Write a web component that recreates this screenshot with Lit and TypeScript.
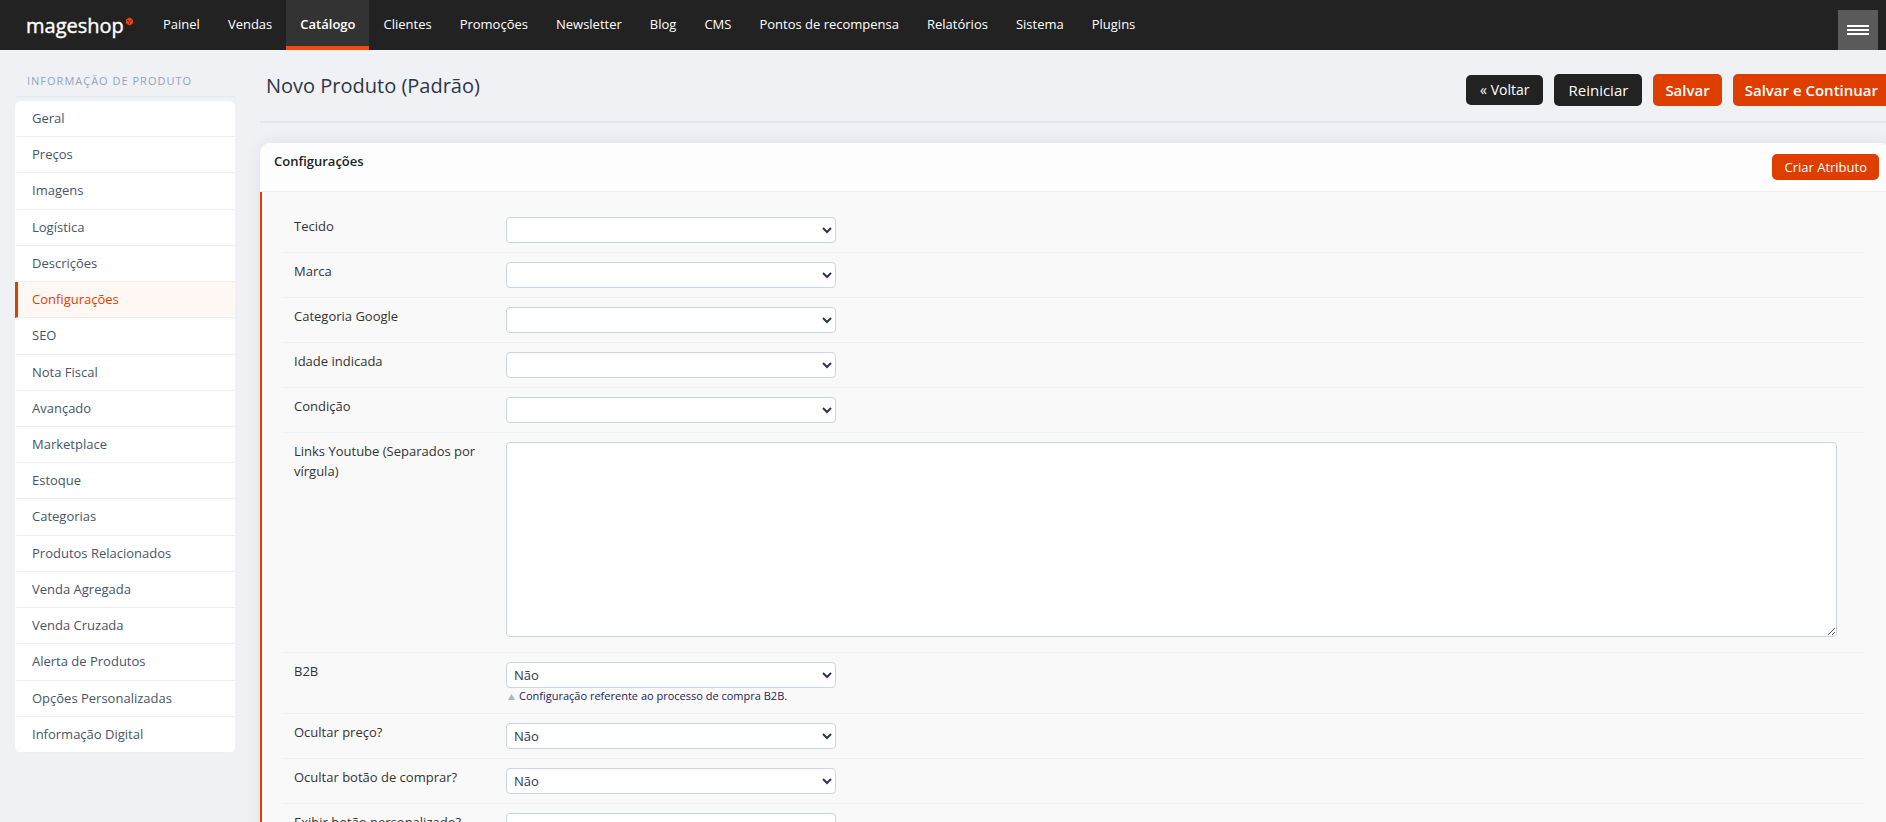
import { LitElement, html, css, nothing } from "lit";
import { customElement, state } from "lit/decorators.js";

interface Field {
  id: string;
  label: string;
  kind: "select" | "textarea";
  options: string[];
  note?: string;
}

const NAV = [
  "Painel", "Vendas", "Catálogo", "Clientes", "Promoções", "Newsletter", "Blog",
  "CMS", "Pontos de recompensa", "Relatórios", "Sistema", "Plugins",
];

const TABS = [
  "Geral", "Preços", "Imagens", "Logística", "Descrições", "Configurações", "SEO",
  "Nota Fiscal", "Avançado", "Marketplace", "Estoque", "Categorias",
  "Produtos Relacionados", "Venda Agregada", "Venda Cruzada", "Alerta de Produtos",
  "Opções Personalizadas", "Informação Digital",
];

const YES_NO = ["Não", "Sim"];

const FIELDS: Field[] = [
  { id: "tecido", label: "Tecido", kind: "select", options: [""] },
  { id: "marca", label: "Marca", kind: "select", options: [""] },
  { id: "categoria", label: "Categoria Google", kind: "select", options: [""] },
  { id: "idade", label: "Idade indicada", kind: "select", options: [""] },
  { id: "condicao", label: "Condição", kind: "select", options: [""] },
  { id: "youtube", label: "Links Youtube (Separados por vírgula)", kind: "textarea", options: [] },
  { id: "b2b", label: "B2B", kind: "select", options: YES_NO, note: "Configuração referente ao processo de compra B2B." },
  { id: "ocultar-preco", label: "Ocultar preço?", kind: "select", options: YES_NO },
  { id: "ocultar-botao", label: "Ocultar botão de comprar?", kind: "select", options: YES_NO },
  { id: "exibir-botao", label: "Exibir botão personalizado?", kind: "select", options: YES_NO },
];

@customElement("top-bar")
export class TopBar extends LitElement {
  static styles = css`
    :host {
      display: flex;
      align-items: stretch;
      height: 50px;
      padding-left: 26px;
      background: #222;
      box-sizing: border-box;
    }
    .logo {
      display: block;
      flex: none;
      width: 123px;
      height: 50px;
    }
    .wordmark {
      font: 500 20px "Open Sans", sans-serif;
      fill: #fff;
      stroke: #fff;
      stroke-width: 0.4px;
    }
    .nav {
      display: flex;
      flex: 1;
    }
    .link {
      padding: 0 14px;
      color: #fff;
      font-size: 13px;
      line-height: 48px;
      text-decoration: none;
      white-space: nowrap;
      box-sizing: border-box;
    }
    .active {
      background: #333;
      border-bottom: 4px solid #f44a0b;
      font-weight: 600;
    }
    .menu {
      display: flex;
      flex-direction: column;
      align-items: center;
      justify-content: center;
      gap: 2px;
      width: 40px;
      height: 40px;
      margin: 10px 8px 0 0;
      padding: 0;
      border: 0;
      background: #5a5a5a;
    }
    .bar {
      width: 22px;
      height: 2px;
      background: #fff;
    }
  `;

  render() {
    return html`
      <svg class="logo" viewBox="0 0 123 50" role="img" aria-label="mageshop">
        <text class="wordmark" x="0" y="33">mageshop</text>
        <path d="M103.500 18l3 1.700v3.600l-3 1.700-3-1.700v-3.600z" fill="#e8480f" stroke="#e8480f" stroke-linejoin="round" />
        <path d="M100.800 20l2.700 1.500 2.700-1.500M103.500 21.500v3" fill="none" stroke="#8d2a06" />
      </svg>
      <nav class="nav">
        ${NAV.map((n) => html`<a href="#" class="link ${n === "Catálogo" ? "active" : ""}">${n}</a>`)}
      </nav>
      <button class="menu" aria-label="Menu">
        <span class="bar"></span><span class="bar"></span><span class="bar"></span>
      </button>
    `;
  }
}

@customElement("side-tabs")
export class SideTabs extends LitElement {
  @state() current = "Configurações";

  static styles = css`
    :host {
      display: block;
    }
    .heading {
      margin: 0 0 4px;
      padding: 0 12px 5px;
      border-bottom: 1px solid #e2e8f0;
      color: #94a3b8;
      font-size: 11px;
      font-weight: 400;
      line-height: 20px;
      letter-spacing: 1px;
      text-transform: uppercase;
    }
    .list {
      display: grid;
      min-height: 652px;
      margin: 0;
      padding: 0;
      list-style: none;
      background: #fff;
      border-radius: 6px;
      overflow: hidden;
    }
    .item {
      display: grid;
    }
    .tab {
      padding: 8px 12px 8px 14px;
      border-left: 3px solid transparent;
      border-bottom: 1px solid #eee;
      color: #475569;
      font-size: 13px;
      line-height: 19px;
      text-decoration: none;
    }
    .current {
      border-left-color: #de3e00;
      background: #fff7f4;
      color: #de3e00;
    }
  `;

  render() {
    return html`
      <h3 class="heading">Informação de Produto</h3>
      <ul class="list">
        ${TABS.map((t) => html`
          <li class="item"><a href="#" class="tab ${t === this.current ? "current" : ""}"
            @click=${(e: Event) => { e.preventDefault(); this.current = t; }}>${t}</a></li>`)}
      </ul>
    `;
  }
}

@customElement("attribute-form")
export class AttributeForm extends LitElement {
  static styles = css`
    :host {
      display: block;
      border-radius: 10px;
      background: #f9f9f9;
      box-shadow: 0 0 16px rgba(30, 41, 59, 0.08);
    }
    .head {
      display: flex;
      align-items: flex-start;
      justify-content: space-between;
      padding: 8px 11px 11px 14px;
      border-bottom: 1px solid #edf0f2;
      border-radius: 10px 10px 0 0;
      background: #fdfdfd;
    }
    .title {
      margin: 0;
      color: #222;
      font-size: 13px;
      font-weight: 600;
      line-height: 20px;
    }
    .create {
      margin-top: 3px;
      height: 26px;
      padding: 0 12px;
      border: 0;
      border-radius: 5px;
      background: #de3e00;
      color: #fff;
      font: 13px "Open Sans", sans-serif;
    }
    .body {
      padding: 16px 26px 40px 20px;
      border-left: 2px solid #de3e00;
    }
    .row {
      display: grid;
      grid-template-columns: 184px 1fr;
      column-gap: 28px;
      padding: 8px 27px 9px 12px;
      border-bottom: 1px solid #edf2f7;
    }
    .label {
      color: #333;
      font-size: 13px;
      line-height: 20px;
    }
    .control {
      padding-top: 1px;
    }
    .select,
    .textarea {
      display: block;
      box-sizing: border-box;
      border: 1px solid #cbd5e1;
      border-radius: 4px;
      background: #fff;
      color: #2d3748;
      font: 13px "Open Sans", sans-serif;
    }
    .select {
      width: 330px;
      height: 26px;
      padding: 0 3px;
    }
    .textarea {
      width: 100%;
      height: 195px;
      margin-bottom: 6px;
      padding: 4px 7px;
    }
    .note {
      display: flex;
      align-items: center;
      gap: 4px;
      margin: 0;
      padding-left: 2px;
      color: #1e2456;
      font-size: 11px;
      line-height: 16px;
    }
    .caret {
      width: 7px;
      height: 7px;
      fill: #a9b8bd;
    }
  `;

  private control(f: Field) {
    if (f.kind === "textarea") return html`<textarea class="textarea" id=${f.id}></textarea>`;
    return html`<select class="select" id=${f.id}>
      ${f.options.map((o) => html`<option>${o}</option>`)}
    </select>`;
  }

  render() {
    return html`
      <header class="head">
        <h2 class="title">Configurações</h2>
        <button class="create">Criar Atributo</button>
      </header>
      <div class="body">
        ${FIELDS.map((f) => html`
          <div class="row">
            <label class="label" for=${f.id}>${f.label}</label>
            <div class="control">
              ${this.control(f)}
              ${f.note
                ? html`<p class="note"><svg class="caret" viewBox="0 0 7 7"><path d="M3.500 1l3.500 6H0z" /></svg>${f.note}</p>`
                : nothing}
            </div>
          </div>`)}
      </div>
    `;
  }
}

@customElement("app-root")
export class AppRoot extends LitElement {
  static styles = css`
    :host {
      display: block;
      height: 100vh;
      overflow: hidden;
      background: #f0f1f5;
      font-family: "Open Sans", sans-serif;
    }
    .layout {
      display: grid;
      grid-template-columns: 220px 1fr;
      column-gap: 25px;
      margin-right: -4px;
      padding-left: 15px;
    }
    .side {
      padding-top: 21px;
    }
    .toolbar {
      display: flex;
      align-items: flex-start;
      justify-content: space-between;
      height: 73px;
      box-sizing: border-box;
      margin-bottom: 20px;
      padding: 24px 0 0 6px;
      border-bottom: 2px solid #e2e8f0;
    }
    .title {
      margin: 0;
      color: #2d3748;
      font-size: 20px;
      font-weight: 500;
      line-height: 24px;
    }
    .actions {
      display: flex;
      align-items: center;
      gap: 11px;
    }
    .btn {
      height: 32px;
      padding: 0 12px;
      border: 0;
      border-radius: 5px;
      background: #de3e00;
      color: #fff;
      font: 600 15px/20px "Open Sans", sans-serif;
      white-space: nowrap;
    }
    .dark {
      padding: 0 14px;
      background: #222;
      font-weight: 500;
    }
    .back {
      height: 30px;
      font-size: 14px;
      font-weight: 400;
    }
  `;

  render() {
    return html`
      <top-bar></top-bar>
      <div class="layout">
        <side-tabs class="side"></side-tabs>
        <main>
          <div class="toolbar">
            <h1 class="title">Novo Produto (Padrão)</h1>
            <div class="actions">
              <button class="btn dark back">« Voltar</button>
              <button class="btn dark">Reiniciar</button>
              <button class="btn">Salvar</button>
              <button class="btn">Salvar e Continuar</button>
            </div>
          </div>
          <attribute-form></attribute-form>
        </main>
      </div>
    `;
  }
}
